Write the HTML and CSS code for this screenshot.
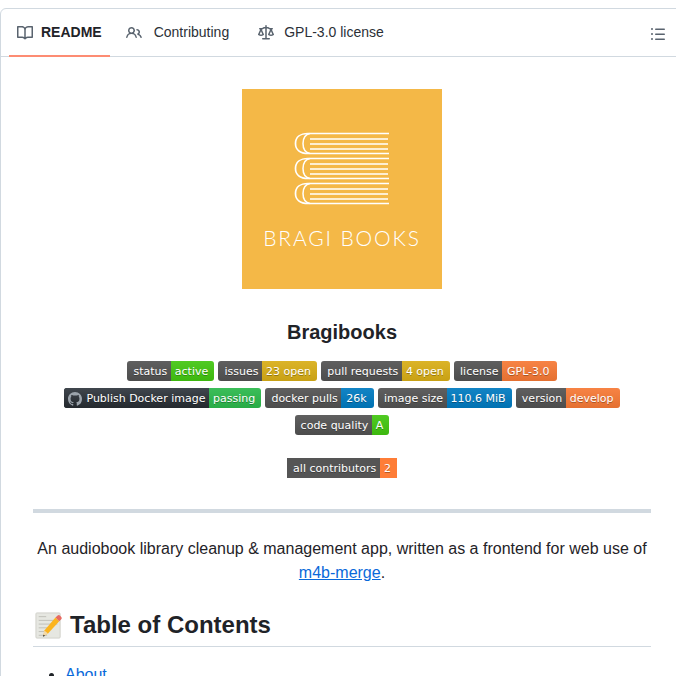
FILE: index.html
```html
<!DOCTYPE html>
<html lang="en">
<head>
    <meta charset="UTF-8">
    <meta name="viewport" content="width=device-width, initial-scale=1.0">
    <title>Bragibooks</title>
    <link rel="stylesheet" href="styles.css">
</head>
<body>
    <div class="readme-box">
        <nav class="tabs">
            <div class="tab-list">
                <a class="tab active" href="#">
                    <svg class="tab-icon" width="16" height="16" viewBox="0 0 16 16"><path d="M0 1.75A.75.75 0 0 1 .75 1h4.253c1.227 0 2.317.59 3 1.501A3.743 3.743 0 0 1 11.006 1h4.245a.75.75 0 0 1 .75.75v10.5a.75.75 0 0 1-.75.75h-4.507a2.25 2.25 0 0 0-1.591.659l-.622.621a.75.75 0 0 1-1.06 0l-.622-.621A2.25 2.25 0 0 0 5.258 13H.75a.75.75 0 0 1-.75-.75Zm7.251 10.324.004-5.073-.002-2.253A2.25 2.25 0 0 0 5.003 2.5H1.5v9h3.757a3.75 3.75 0 0 1 1.994.574ZM8.755 4.75l-.004 7.322a3.752 3.752 0 0 1 1.992-.572H14.5v-9h-3.495a2.25 2.25 0 0 0-2.25 2.25Z"/></svg>
                    README
                </a>
                <a class="tab tab-contributing" href="#">
                    <svg class="tab-icon" width="16" height="16" viewBox="0 0 16 16"><path d="M2 5.5a3.5 3.5 0 1 1 5.898 2.549 5.508 5.508 0 0 1 3.034 4.084.75.75 0 1 1-1.482.235 4 4 0 0 0-7.9 0 .75.75 0 0 1-1.482-.236A5.507 5.507 0 0 1 3.102 8.05 3.493 3.493 0 0 1 2 5.5ZM11 4a3.001 3.001 0 0 1 2.22 5.018 5.01 5.01 0 0 1 2.56 3.012.749.749 0 0 1-.885.954.752.752 0 0 1-.549-.514 3.507 3.507 0 0 0-2.522-2.372.75.75 0 0 1-.574-.73v-.352a.75.75 0 0 1 .416-.672A1.5 1.5 0 0 0 11 5.5.75.75 0 0 1 11 4Zm-5.5-.5a2 2 0 1 0-.001 3.999A2 2 0 0 0 5.5 3.5Z"/></svg>
                    Contributing
                </a>
                <a class="tab tab-license" href="#">
                    <svg class="tab-icon" width="16" height="16" viewBox="0 0 16 16"><path d="M8.75.75V2h.985c.304 0 .603.08.867.231l1.29.736c.038.022.08.033.124.033h2.234a.75.75 0 0 1 0 1.5h-.427l2.111 4.692a.75.75 0 0 1-.154.838l-.53-.53.529.531-.001.002-.002.002-.006.006-.006.005-.01.01-.045.04c-.21.176-.441.327-.686.45C14.556 10.78 13.88 11 13 11a4.498 4.498 0 0 1-2.023-.454 3.544 3.544 0 0 1-.686-.45l-.045-.04-.016-.015-.006-.006-.004-.004v-.001a.75.75 0 0 1-.154-.838L12.178 4.5h-.162c-.305 0-.604-.079-.868-.231l-1.29-.736a.245.245 0 0 0-.124-.033H8.75V13h2.5a.75.75 0 0 1 0 1.5h-6.5a.75.75 0 0 1 0-1.5h2.5V3.5h-.984a.245.245 0 0 0-.124.033l-1.289.737c-.265.15-.564.23-.869.23h-.162l2.112 4.692a.75.75 0 0 1-.154.838l-.53-.53.529.531-.001.002-.002.002-.006.006-.016.015-.045.04c-.21.176-.441.327-.686.45C4.556 10.78 3.88 11 3 11a4.498 4.498 0 0 1-2.023-.454 3.544 3.544 0 0 1-.686-.45l-.045-.04-.016-.015-.006-.006-.004-.004v-.001a.75.75 0 0 1-.154-.838L2.178 4.5H1.75a.75.75 0 0 1 0-1.5h2.234a.249.249 0 0 0 .125-.033l1.288-.737c.265-.15.564-.23.869-.23h.984V.75a.75.75 0 0 1 1.5 0Zm2.945 8.477c.285.135.718.273 1.305.273s1.02-.138 1.305-.273L13 6.327Zm-10 0c.285.135.718.273 1.305.273s1.02-.138 1.305-.273L3 6.327Z"/></svg>
                    GPL-3.0 license
                </a>
            </div>
            <svg class="tab-icon outline-icon" width="16" height="16" viewBox="0 0 16 16"><path d="M5.75 2.5h8.5a.75.75 0 0 1 0 1.5h-8.5a.75.75 0 0 1 0-1.5Zm0 5h8.5a.75.75 0 0 1 0 1.5h-8.5a.75.75 0 0 1 0-1.5Zm0 5h8.5a.75.75 0 0 1 0 1.5h-8.5a.75.75 0 0 1 0-1.5ZM2 14a1 1 0 1 1 0-2 1 1 0 0 1 0 2Zm1-6a1 1 0 1 1-2 0 1 1 0 0 1 2 0ZM2 4a1 1 0 1 1 0-2 1 1 0 0 1 0 2Z"/></svg>
        </nav>

        <article class="markdown">
            <div class="logo-wrap">
                <div class="logo">
                    <svg class="logo-books" width="96" height="76" viewBox="0 0 96 76" fill="none" stroke="#fff" stroke-width="1.5">
                        <g id="book">
                            <path d="M95 1.5H14C6 1.5 1.5 5.5 1.5 11.5s4.5 10 12.5 10h81" stroke-width="1.7"/>
                            <path d="M16 1.5C11 2.5 9 6.5 9 11.5s2 9 7 10"/>
                            <path d="M16 7h78M16 12h78M16 17h78"/>
                        </g>
                        <use href="#book" y="25"/>
                        <use href="#book" y="50"/>
                    </svg>
                    <div class="logo-text">BRAGI BOOKS</div>
                </div>
            </div>

            <h2 class="project-title">Bragibooks</h2>

            <div class="badges">
                <span class="badge"><span class="badge-label">status</span><span class="badge-value green">active</span></span>
                <span class="badge"><span class="badge-label">issues</span><span class="badge-value yellow">23 open</span></span>
                <span class="badge"><span class="badge-label">pull requests</span><span class="badge-value yellow">4 open</span></span>
                <span class="badge"><span class="badge-label">license</span><span class="badge-value orange roomy">GPL-3.0</span></span>
                <span class="badge"><span class="badge-label dark">
                    <svg class="gh-mark" width="14" height="14" viewBox="0 0 16 16"><path d="M8 0c4.42 0 8 3.58 8 8a8.013 8.013 0 0 1-5.45 7.59c-.4.08-.55-.17-.55-.38 0-.27.01-1.13.01-2.2 0-.75-.25-1.23-.54-1.48 1.78-.2 3.65-.88 3.65-3.95 0-.88-.31-1.59-.82-2.15.08-.2.36-1.02-.08-2.12 0 0-.67-.22-2.2.82-.64-.18-1.32-.27-2-.27-.68 0-1.36.09-2 .27-1.53-1.03-2.2-.82-2.2-.82-.44 1.1-.16 1.92-.08 2.12-.51.56-.82 1.28-.82 2.15 0 3.06 1.86 3.75 3.64 3.95-.23.2-.44.55-.51 1.07-.46.21-1.61.55-2.33-.66-.15-.24-.6-.83-1.23-.82-.67.01-.27.38.01.53.34.19.73.9.82 1.13.16.45.68 1.31 2.69.94 0 .67.01 1.3.01 1.49 0 .21-.15.45-.55.38A7.995 7.995 0 0 1 0 8c0-4.42 3.58-8 8-8Z"/></svg>
                    Publish Docker image</span><span class="badge-value passing">passing</span></span>
                <span class="badge"><span class="badge-label">docker pulls</span><span class="badge-value blue roomy">26k</span></span>
                <span class="badge"><span class="badge-label">image size</span><span class="badge-value blue">110.6 MiB</span></span>
                <span class="badge"><span class="badge-label">version</span><span class="badge-value orange">develop</span></span>
                <span class="badge"><span class="badge-label">code quality</span><span class="badge-value green">A</span></span>
            </div>

            <div class="badges contributors">
                <span class="badge square"><span class="badge-label">all contributors</span><span class="badge-value orange">2</span></span>
            </div>

            <hr class="rule">

            <p class="intro">An audiobook library cleanup &amp; management app, written as a frontend for web use of <a href="#" class="underlined">m4b-merge</a>.</p>

            <h2 class="section-title">
                <svg class="memo" width="27" height="27" viewBox="0 0 29 29">
                    <rect x="1" y="1" width="26" height="27" rx="1" fill="#e6e7e1" stroke="#cfcfc8"/>
                    <path d="M4 5h8M4 9h20M4 13h20M4 17h14M4 21h10M4 25h9" stroke="#bdbdb6" stroke-width="1"/>
                    <path d="M22 6l4 4-12 13-5 3 1-6z" fill="#fbb41f"/>
                    <path d="M22 6l2-2c1-1 2-1 3 0l1 1c1 1 1 2 0 3l-2 2z" fill="#e86a62"/>
                    <path d="M10 20l4 3-5 3z" fill="#f3d9a8"/>
                    <path d="M9 24.5l2 1-2.5 1z" fill="#3c3c3c"/>
                </svg>
                Table of Contents
            </h2>

            <ul class="toc">
                <li><a href="#">About</a></li>
            </ul>
        </article>
    </div>
</body>
</html>
```

FILE: styles.css
```css
* {
    box-sizing: border-box;
}

html, body {
    height: 100%;
    overflow: hidden;
}

body {
    margin: 0;
    padding-top: 8px;
    background: #fff;
    color: #1f2328;
    font-family: 'Liberation Sans', Arial, sans-serif;
    font-size: 16px;
    line-height: 1.5;
}

a {
    color: #0969da;
    text-decoration: none;
}

.readme-box {
    width: 684px;
    border: 1px solid #d1d9e0;
    border-radius: 6px 6px 0 0;
}

.tabs {
    display: flex;
    align-items: center;
    justify-content: space-between;
    height: 48px;
    padding-left: 8px;
    padding-right: 17px;
    border-bottom: 1px solid #d1d9e0;
}

.tab-list {
    display: flex;
    height: 48px;
    gap: 8px;
}

.tab {
    display: flex;
    align-items: center;
    gap: 8px;
    height: 48px;
    padding: 2px 8px 0;
    color: #2b3037;
    font-size: 14px;
    border-bottom: 2px solid transparent;
}

.tab.active {
    color: #1f2328;
    font-weight: 700;
    border-bottom-color: #fd8c73;
}

.tab-contributing {
    gap: 12px;
}

.tab-license {
    gap: 10px;
    margin-left: 5px;
}

.tab-icon {
    fill: #59636e;
    flex: none;
}

.outline-icon {
    margin-top: 2px;
}

.markdown {
    padding: 32px;
}

.logo-wrap {
    display: flex;
    justify-content: center;
}

.logo {
    display: flex;
    flex-direction: column;
    align-items: center;
    width: 200px;
    height: 200px;
    padding-top: 43px;
    background: #f4b847;
}

.logo-text {
    margin-top: 17px;
    color: #fff;
    font-family: Lato, sans-serif;
    font-weight: 300;
    font-size: 21px;
    line-height: 26px;
    letter-spacing: 1.85px;
    white-space: nowrap;
}

.project-title {
    margin: 27px 0 13px;
    font-size: 20px;
    line-height: 32px;
    text-align: center;
}

.badges {
    display: flex;
    flex-wrap: wrap;
    justify-content: center;
    gap: 7px 4.2px;
}

.contributors {
    margin-top: 23px;
}

.badge {
    display: inline-flex;
    height: 20px;
    border-radius: 3px;
    overflow: hidden;
    color: #fff;
    font-family: 'DejaVu Sans', sans-serif;
    font-size: 11px;
    line-height: 20px;
    white-space: nowrap;
    text-shadow: 0 1px 0 rgba(1, 1, 1, 0.3);
}

.badge.square {
    border-radius: 0;
}

.badge-label,
.badge-value {
    display: flex;
    align-items: center;
    background-image: linear-gradient(rgba(187, 187, 187, 0.1), rgba(0, 0, 0, 0.1));
}

.badge-label {
    padding: 1px 3.6px 0 6px;
    background-color: #555;
}

.badge-value {
    padding: 1px 6px 0 4px;
}

.badge-value.roomy {
    padding: 1px 7px 0 5px;
}

.badge.square .badge-label,
.badge.square .badge-value {
    background-image: none;
}

.badge-label.dark {
    gap: 4px;
    padding-left: 4px;
    background-color: #24292e;
    background-image: linear-gradient(#40464d, #24292e);
}

.gh-mark {
    fill: #9ba3ab;
}

.green { background-color: #4c1; }
.yellow { background-color: #dfb317; }
.orange { background-color: #fe7d37; }
.blue { background-color: #007ec6; }
.passing { background-color: #2dbe4e; }

.rule {
    height: 4px;
    margin: 31px 0 24px;
    padding: 0;
    border: 0;
    background: #d1d9e0;
}

.intro {
    margin: 0 0 16px;
    text-align: center;
}

.underlined {
    text-decoration: underline;
}

.section-title {
    display: flex;
    align-items: center;
    gap: 8px;
    margin: 25px 0 16px;
    padding-bottom: 6px;
    font-size: 24px;
    line-height: 30px;
    border-bottom: 1px solid #d1d9e0;
}

.memo {
    flex: none;
    margin-left: 2px;
}

.toc {
    margin: 0;
    padding-left: 32px;
}
```
